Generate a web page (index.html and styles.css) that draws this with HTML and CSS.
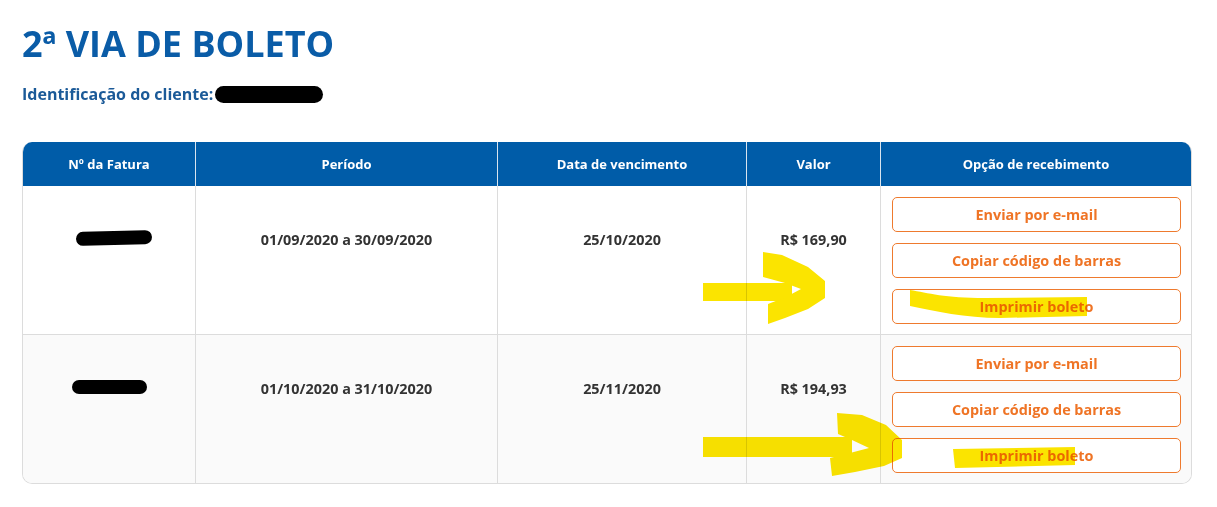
FILE: index.html
```html
<!DOCTYPE html>
<html lang="pt-BR">
<head>
<meta charset="utf-8">
<title>2ª via de boleto</title>
<link rel="stylesheet" href="styles.css">
</head>
<body>
<main class="page">
  <h1 class="title">2ª VIA DE BOLETO</h1>
  <p class="client">Identificação do cliente:<span class="redact redact-client"></span></p>

  <table class="bills">
    <thead>
      <tr>
        <th class="c1">Nº da Fatura</th>
        <th class="c2">Período</th>
        <th class="c3">Data de vencimento</th>
        <th class="c4">Valor</th>
        <th class="c5">Opção de recebimento</th>
      </tr>
    </thead>
    <tbody>
      <tr>
        <td><span class="redact redact-inv1"></span></td>
        <td>01/09/2020 a 30/09/2020</td>
        <td>25/10/2020</td>
        <td>R$ 169,90</td>
        <td class="actions">
          <button class="btn">Enviar por e-mail</button>
          <button class="btn">Copiar código de barras</button>
          <button class="btn">Imprimir boleto</button>
        </td>
      </tr>
      <tr class="alt">
        <td><span class="redact redact-inv2"></span></td>
        <td>01/10/2020 a 31/10/2020</td>
        <td>25/11/2020</td>
        <td>R$ 194,93</td>
        <td class="actions">
          <button class="btn">Enviar por e-mail</button>
          <button class="btn">Copiar código de barras</button>
          <button class="btn">Imprimir boleto</button>
        </td>
      </tr>
    </tbody>
  </table>
</main>

<svg class="marks" width="1217" height="507" viewBox="0 0 1217 507" aria-hidden="true">
  <g fill="#fbe400">
    <path d="M703 283 L792 283 L792 301 L703 301 Z"/>
    <path d="M763 252 L782 255 L808 267 L825 281 L825 298 L808 309 L785 318 L768 324 L768 304 L786 297 L801 289 L785 283 L763 277 Z"/>
    <path d="M703 437 L852 437 L852 457 L703 457 Z"/>
    <path d="M837 413 L862 415 L886 425 L902 440 L902 458 L884 466 L855 472 L832 476 L830 458 L850 453 L869 448 L852 440 L838 434 Z"/>
    <path d="M910 290 C928 293 945 298 985 298 L1087 297 L1087 316 L1000 318 C965 318 935 311 910 306 Z"/>
    <path d="M953 449 L1075 447 L1075 465 L955 468 Z"/>
  </g>
</svg>
</body>
</html>
```

FILE: styles.css
```css
* { box-sizing: border-box; }

html, body {
  margin: 0;
  padding: 0;
  background: #ffffff;
}

body {
  font-family: "Open Sans", "Liberation Sans", sans-serif;
  color: #333333;
  position: relative;
  width: 1217px;
  height: 507px;
  overflow: hidden;
}

.page {
  padding: 22px 25px 0 22px;
}

.title {
  margin: 0;
  font-size: 36px;
  line-height: 44px;
  font-weight: 700;
  color: #0a5ca7;
  letter-spacing: 0;
}

.client {
  margin: 17px 0 0 0;
  font-size: 16px;
  line-height: 22px;
  font-weight: 700;
  color: #1b5a98;
  display: flex;
  align-items: center;
}

.redact {
  display: inline-block;
  background: #000;
  border-radius: 9px;
}

.redact-client {
  width: 108px;
  height: 17px;
  margin-left: 2px;
}

.redact-inv1 {
  width: 76px;
  height: 14px;
  margin-left: 9px;
  transform: rotate(-1.5deg);
}

.redact-inv2 {
  width: 75px;
  height: 14px;
  margin-left: 1px;
}

.bills {
  margin-top: 37px;
  width: 1170px;
  border-collapse: separate;
  border-spacing: 0;
  border: 1px solid #dcdcdc;
  border-top: 0;
  border-radius: 10px;
  overflow: hidden;
  table-layout: fixed;
}

.bills th {
  background: #005ca8;
  color: #ffffff;
  font-size: 13px;
  font-weight: 700;
  height: 44px;
  padding: 0 8px;
  text-align: center;
  vertical-align: middle;
  border-right: 1px solid #d9e4ef;
}

.bills th:last-child { border-right: 0; }

.c1 { width: 173px; }
.c2 { width: 302px; }
.c3 { width: 249px; }
.c4 { width: 134px; }
.c5 { width: auto; }

.bills td {
  font-size: 14.4px;
  font-weight: 700;
  color: #333333;
  text-align: center;
  vertical-align: top;
  padding: 44px 8px 0 8px;
  line-height: 20px;
  border-right: 1px solid #dcdcdc;
  border-top: 1px solid #dcdcdc;
}

.bills tbody tr:first-child td { border-top: 0; }

.bills td:last-child { border-right: 0; }

.bills tr.alt td { background: #fafafa; }

.bills td.actions {
  padding: 11px 10px 10px 11px;
  display: flex;
  flex-direction: column;
  gap: 11px;
}

.btn {
  display: block;
  width: 100%;
  height: 35px;
  background: #ffffff;
  border: 1px solid #ee7a2e;
  border-radius: 5px;
  color: #ef7425;
  font-family: "Open Sans", "Liberation Sans", sans-serif;
  font-size: 14.4px;
  font-weight: 700;
  padding: 0;
  cursor: pointer;
}

.marks {
  position: absolute;
  left: 0;
  top: 0;
  pointer-events: none;
  mix-blend-mode: multiply;
}
```
